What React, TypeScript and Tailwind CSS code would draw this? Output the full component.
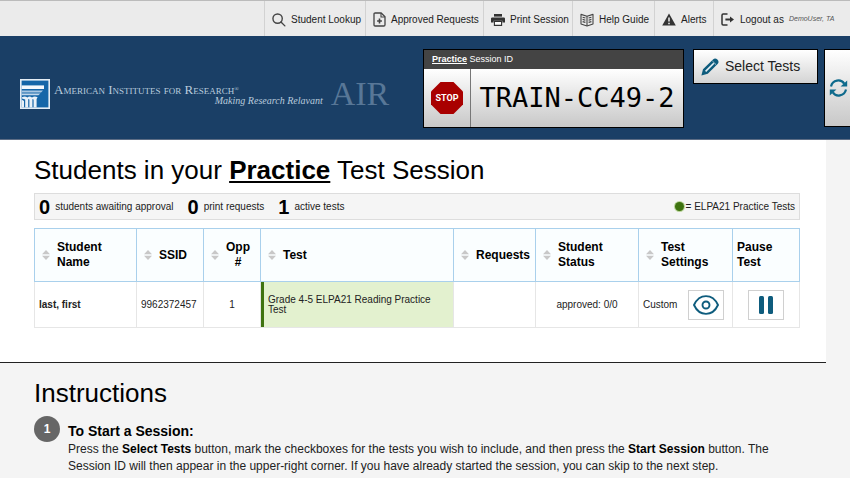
import type { ReactNode } from "react";

const SANS = "font-['Liberation_Sans',Arial,sans-serif]";

function SearchIcon() {
  return (
    <svg width="14" height="14" viewBox="0 0 15 15" className="shrink-0" fill="none" stroke="#444" strokeWidth="1.5">
      <circle cx="6" cy="6" r="5" />
      <path d="M9.6 9.6L13.8 13.8" strokeLinecap="round" />
    </svg>
  );
}

function FilePlusIcon() {
  return (
    <svg width="13" height="15" viewBox="0 0 13 15" className="shrink-0" fill="none" stroke="#444" strokeWidth="1.3">
      <path d="M1 2.2Q1 1 2.2 1H8.2L12 4.8V12.8Q12 14 10.8 14H2.2Q1 14 1 12.8Z" strokeLinejoin="round" />
      <path d="M8 1V5H12" strokeWidth="1.1" />
      <path d="M6.5 6.6V11.4M4.1 9H8.9" strokeWidth="1.6" />
    </svg>
  );
}

function PrinterIcon() {
  return (
    <svg width="14" height="14" viewBox="0 0 14 14" className="shrink-0">
      <path d="M3 1H11V3.6H3Z" fill="#333" />
      <path d="M1.2 4.4H12.8Q14 4.4 14 5.6V9.4H11.4V7.8H2.6V9.4H0V5.6Q0 4.4 1.2 4.4Z" fill="#333" />
      <path d="M3.4 8.4H10.6V12.4H3.4Z" fill="#fff" stroke="#333" strokeWidth="1.1" />
    </svg>
  );
}

function BookIcon() {
  return (
    <svg width="14" height="14" viewBox="0 0 14 14" className="shrink-0" fill="none" stroke="#444" strokeWidth="1.1">
      <path d="M7 3.2L1 1.4V11L7 13L13 11V1.4Z" strokeLinejoin="round" />
      <path d="M7 3.2V13M2.6 4.2L5.4 5M2.6 6.4L5.4 7.2M2.6 8.6L5.4 9.4M11.4 4.2L8.6 5M11.4 6.4L8.6 7.2M11.4 8.6L8.6 9.4" />
    </svg>
  );
}

function AlertIcon() {
  return (
    <svg width="14" height="13" viewBox="0 0 14 13" className="shrink-0">
      <path d="M7 0.6L13.8 12.6H0.2Z" fill="#333" />
      <path d="M7 4.4V8.6M7 9.8V11.3" stroke="#fff" strokeWidth="1.4" />
    </svg>
  );
}

function LogoutIcon() {
  return (
    <svg width="14" height="13" viewBox="0 0 14 13" className="shrink-0" fill="none" stroke="#333">
      <path d="M6.5 1H2.2Q1 1 1 2.2V10.8Q1 12 2.2 12H6.5" strokeWidth="1.5" />
      <path d="M4.4 6.5H10" strokeWidth="2" />
      <path d="M9 3.4L13 6.5L9 9.6Z" fill="#333" stroke="none" />
    </svg>
  );
}

function ColumnLogo() {
  return (
    <svg width="30" height="30" viewBox="0 0 30 30" className="shrink-0">
      <rect width="30" height="30" fill="#e4edf5" />
      <rect x="1.6" y="1.6" width="26.8" height="26.8" fill="#1566a8" />
      <path d="M1.6 6.4H24V10H1.6Z" fill="#f4f8fc" />
      <path d="M1.6 11.5H23L21 13.4H1.6Z" fill="#a9c7e2" />
      <path d="M1.6 14.4H20.4L18.4 16.2H1.6Z" fill="#c2d8eb" />
      <path d="M2 18.2Q5 16.6 7.4 18.4Q9.4 16.6 12 18.4Q14.6 16.6 17.6 18.2L16.6 20V28.4H13.6V20.4L12.4 20V28.4H9.4V20.4L8.2 20V28.4H5.2V20.4L2 19.4Z" fill="#e9f1f8" />
      <path d="M1.6 20.6L4 22V28.4H1.6Z" fill="#e9f1f8" />
    </svg>
  );
}

function StopSign() {
  return (
    <svg width="32" height="32" viewBox="0 0 32 32">
      <path d="M9.5 0H22.5L32 9.5V22.5L22.5 32H9.5L0 22.5V9.5Z" fill="#a90000" />
      <text x="16" y="19" textAnchor="middle" fill="#fff" className="font-[Roboto,sans-serif] text-[9px] font-bold">
        STOP
      </text>
    </svg>
  );
}

function PencilIcon() {
  return (
    <svg width="18" height="18" viewBox="0 0 18 18">
      <path d="M0.4 17.6L2 11.2L12 1.4Q14.2 -0.6 16.4 1.6Q18.6 3.8 16.6 6L6.8 15.8Z" fill="#0e5c7d" />
      <path d="M4.6 13.4L12.8 5.2" stroke="#e6f1f6" strokeWidth="1.6" />
      <path d="M11.4 3L15 6.6" stroke="#e6f1f6" strokeWidth="0.7" />
    </svg>
  );
}

function RefreshIcon() {
  return (
    <svg width="19" height="18" viewBox="0 0 19 18" fill="none" stroke="#0e6a8c" strokeWidth="2.2">
      <path d="M2 7.4C3.6 0.6 12 -0.4 15.2 4.6" />
      <path d="M17 10.6C15.4 17.4 7 18.4 3.8 13.4" />
      <path d="M18.2 1.4V7.6H11.6Z" fill="#0e6a8c" stroke="none" />
      <path d="M0.8 16.6V10.4H7.4Z" fill="#0e6a8c" stroke="none" />
    </svg>
  );
}

function EyeIcon() {
  return (
    <svg width="26" height="20" viewBox="0 0 26 20" fill="none" stroke="#0e5c7d" strokeWidth="1.9">
      <path d="M1 10C6.5 -1.8 19.5 -1.8 25 10C19.5 21.8 6.5 21.8 1 10Z" strokeLinejoin="round" />
      <circle cx="13" cy="10" r="3.5" />
    </svg>
  );
}

function PauseIcon() {
  return (
    <svg width="16" height="18" viewBox="0 0 16 18" fill="#0e5c7d">
      <rect x="1" width="5" height="18" rx="1.5" />
      <rect x="10" width="5" height="18" rx="1.5" />
    </svg>
  );
}

function SortIcon() {
  return (
    <svg width="8" height="10" viewBox="0 0 8 10" className="shrink-0" fill="#c8c8c8">
      <path d="M4 0L8 4.2H0Z" />
      <path d="M4 10L8 5.8H0Z" />
    </svg>
  );
}

const navItems: { label: string; icon: ReactNode; className: string; user?: string }[] = [
  { label: "Student Lookup", icon: <SearchIcon />, className: "w-[101px]" },
  { label: "Approved Requests", icon: <FilePlusIcon />, className: "w-[118px]" },
  { label: "Print Session", icon: <PrinterIcon />, className: "w-[89px]" },
  { label: "Help Guide", icon: <BookIcon />, className: "w-[82px]" },
  { label: "Alerts", icon: <AlertIcon />, className: "w-[59px]" },
  { label: "Logout as", icon: <LogoutIcon />, className: "w-[137px]", user: "DemoUser, TA" },
];

const columns: { lines: string[]; sortable: boolean; className: string; text?: string }[] = [
  { lines: ["Student", "Name"], sortable: true, className: "w-[102px]" },
  { lines: ["SSID"], sortable: true, className: "w-[67px]" },
  { lines: ["Opp", "#"], sortable: true, className: "w-[57px]", text: "text-center" },
  { lines: ["Test"], sortable: true, className: "" },
  { lines: ["Requests"], sortable: true, className: "w-[82px]" },
  { lines: ["Student", "Status"], sortable: true, className: "w-[103px]" },
  { lines: ["Test", "Settings"], sortable: true, className: "w-[94px]" },
  { lines: ["Pause", "Test"], sortable: false, className: "w-[67px]" },
];

const counts = [
  { value: 0, label: "students awaiting approval" },
  { value: 0, label: "print requests" },
  { value: 1, label: "active tests" },
];

function TopNav() {
  return (
    <nav className="flex h-9 justify-end border-t border-[#bbb] bg-[#ebebeb]">
      {navItems.map((item) => (
        <a
          key={item.label}
          href="#"
          className={`flex items-center gap-[5px] whitespace-nowrap border-l border-[#d2d2d2] pl-[7px] pt-[2px] text-[10px] text-[#222] ${item.className}`}
        >
          {item.icon}
          {item.label}
          {item.user && <em className="text-[7px] text-[#555]">{item.user}</em>}
        </a>
      ))}
    </nav>
  );
}

function Header() {
  return (
    <header className="flex h-[104px] items-start overflow-hidden border-b border-[#5d6d85] bg-[#1a3f66] pt-[13px]">
      <div className="flex flex-1 items-center gap-1 self-center pl-5 font-['Liberation_Serif',serif] text-[#b9cbdd]">
        <ColumnLogo />
        <div className="whitespace-nowrap">
          <p className="text-[13px] leading-[13px] [font-variant:small-caps]">
            American Institutes for Research<sup className="text-[6px]">®</sup>
          </p>
          <p className="-mr-21 text-right text-[10px] italic leading-[9px]">Making Research Relavant</p>
        </div>
        <span className="ml-22 text-[34px] leading-8 text-[#587797]">AIR</span>
      </div>

      <section className="w-[261px] shrink-0 border border-black bg-white">
        <h2 className="h-[19px] bg-[#444] pl-2 text-[9px] leading-[19px] text-white">
          <b className="underline">Practice</b> Session ID
        </h2>
        <div className="flex h-[58px] bg-linear-to-b from-white to-[#c8c8c8]">
          <button aria-label="Stop session" className="flex w-[47px] items-center justify-center border-r border-[#777]">
            <StopSign />
          </button>
          <output className="flex flex-1 items-center justify-center font-['DejaVu_Sans_Mono',monospace] text-[27px] text-black">
            TRAIN-CC49-2
          </output>
        </div>
      </section>

      <button className="ml-[9px] flex h-[35px] w-[125px] shrink-0 items-center gap-[6px] border border-black bg-linear-to-b from-white to-[#d4d4d4] pl-[7px] text-[14px] text-[#222]">
        <PencilIcon />
        Select Tests
      </button>

      <button
        aria-label="Refresh"
        className="-mr-24 ml-[6px] flex h-[78px] w-[122px] shrink-0 items-center border border-black bg-linear-to-b from-white to-[#c8c8c8] pl-1"
      >
        <RefreshIcon />
      </button>
    </header>
  );
}

function SessionTable() {
  return (
    <table className="mt-2 w-full table-fixed border-collapse text-[#222]">
      <thead>
        <tr className="h-[53px] bg-[#fafeff]">
          {columns.map((col, i) => (
            <th key={i} className={`border border-[#a9d0ec] p-0 text-left text-[12px] leading-[15px] text-black ${col.className}`}>
              <div className={`flex items-center gap-[7px] ${col.sortable ? "pl-[7px]" : "pl-1"}`}>
                {col.sortable && <SortIcon />}
                <span className={col.text}>
                  {col.lines.map((line) => (
                    <span key={line} className="block">{line}</span>
                  ))}
                </span>
              </div>
            </th>
          ))}
        </tr>
      </thead>
      <tbody>
        <tr className="h-[46px] text-[10px] leading-[10px] *:border *:border-t-0 *:border-[#e6e6e6]">
          <td className="pl-1 font-bold">last, first</td>
          <td className="pl-1">9962372457</td>
          <td className="text-center">1</td>
          <td className="p-0">
            <div className="flex h-[45px] items-center border-l-[3px] border-[#3f7310] bg-[#e3f1cf] px-1">
              Grade 4-5 ELPA21 Reading Practice Test
            </div>
          </td>
          <td />
          <td className="text-center">approved: 0/0</td>
          <td className="p-0">
            <div className="flex items-center justify-between pl-1 pr-2">
              Custom
              <button aria-label="View settings" className="flex h-[30px] w-9 items-center justify-center border border-[#d0d0d0] bg-white">
                <EyeIcon />
              </button>
            </div>
          </td>
          <td className="p-0">
            <button aria-label="Pause test" className="mx-auto flex h-[30px] w-9 items-center justify-center border border-[#d0d0d0] bg-white">
              <PauseIcon />
            </button>
          </td>
        </tr>
      </tbody>
    </table>
  );
}

export default function App() {
  return (
    <div className={`min-h-screen overflow-hidden bg-[#f4f4f4] ${SANS}`}>
      <TopNav />
      <Header />

      <main className="mr-6 border-b border-[#222] bg-white pb-[34px] pl-[34px] pr-[26px] pt-[15px]">
        <h1 className="text-[26px] leading-[30px] text-black">
          Students in your <b className="underline decoration-2 underline-offset-2">Practice</b> Test Session
        </h1>

        <div className="mt-2 flex h-[27px] items-center border border-[#ddd] bg-[#f5f5f5] px-1 text-[10px] text-[#222]">
          <ul className="flex flex-1 gap-[14px]">
            {counts.map((count) => (
              <li key={count.label} className="flex items-center gap-[5px]">
                <b className="text-[20px] leading-5 text-black">{count.value}</b>
                {count.label}
              </li>
            ))}
          </ul>
          <span className="mr-[2px] size-[9px] rounded-full bg-[#3f7310] ring-1 ring-[#b9d49a]" />
          = ELPA21 Practice Tests
        </div>

        <SessionTable />
      </main>

      <section className="pl-[34px] pr-[50px] pt-[15px]">
        <h2 className="text-[26px] leading-[30px] text-black">Instructions</h2>
        <div className="mt-2 flex items-start gap-2">
          <span className="flex size-[26px] shrink-0 items-center justify-center rounded-full bg-[#666] text-[12px] font-bold text-white">
            1
          </span>
          <div className="pt-[6px] text-[12px] leading-[17px] text-[#222]">
            <h3 className="text-[14px] font-bold leading-[19px] text-black">To Start a Session:</h3>
            <p>
              Press the <b className="text-black">Select Tests</b> button, mark the checkboxes for the tests you wish to include, and then press the{" "}
              <b className="text-black">Start Session</b> button. The Session ID will then appear in the upper-right corner. If you have already
              started the session, you can skip to the next step.
            </p>
          </div>
        </div>
      </section>
    </div>
  );
}
